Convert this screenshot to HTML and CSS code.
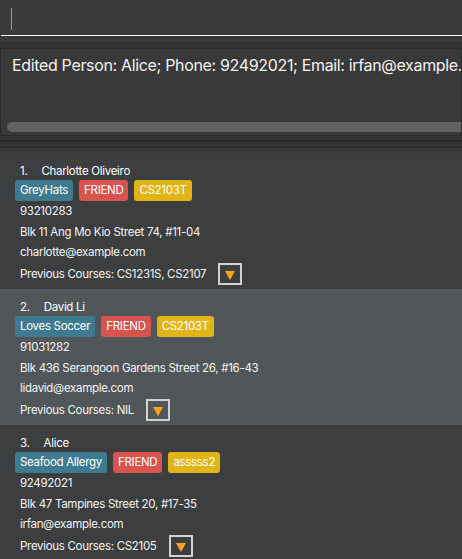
FILE: index.html
```html
<!DOCTYPE html>
<html>
<head>
<meta charset="utf-8">
<link rel="stylesheet" href="styles.css">
</head>
<body>
<div class="app">
  <div class="command"><span class="caret"></span></div>
  <div class="sep-top"></div>
  <div class="result">
    <div class="result-text">Edited Person: Alice; Phone: 92492021; Email: irfan@example.com</div>
    <div class="hscroll"></div>
  </div>
  <div class="sep-mid"></div>
  <div class="list">
    <div class="card">
      <div class="name"><span class="idx">1.</span><span>Charlotte Oliveiro</span></div>
      <div class="tags"><span class="tag teal">GreyHats</span><span class="tag red">FRIEND</span><span class="tag yellow">CS2103T</span></div>
      <div class="line">93210283</div>
      <div class="line">Blk 11 Ang Mo Kio Street 74, #11-04</div>
      <div class="line">charlotte@example.com</div>
      <div class="courses"><span>Previous Courses: CS1231S, CS2107</span><span class="drop"><span class="tri"></span></span></div>
    </div>
    <div class="card odd">
      <div class="name"><span class="idx">2.</span><span>David Li</span></div>
      <div class="tags"><span class="tag teal">Loves Soccer</span><span class="tag red">FRIEND</span><span class="tag yellow">CS2103T</span></div>
      <div class="line">91031282</div>
      <div class="line">Blk 436 Serangoon Gardens Street 26, #16-43</div>
      <div class="line">lidavid@example.com</div>
      <div class="courses"><span>Previous Courses: NIL</span><span class="drop"><span class="tri"></span></span></div>
    </div>
    <div class="card">
      <div class="name"><span class="idx">3.</span><span>Alice</span></div>
      <div class="tags"><span class="tag teal">Seafood Allergy</span><span class="tag red">FRIEND</span><span class="tag yellow">asssss2</span></div>
      <div class="line">92492021</div>
      <div class="line">Blk 47 Tampines Street 20, #17-35</div>
      <div class="line">irfan@example.com</div>
      <div class="courses"><span>Previous Courses: CS2105</span><span class="drop"><span class="tri"></span></span></div>
    </div>
  </div>
</div>
</body>
</html>
```
FILE: styles.css
```css
html, body {
  margin: 0;
  padding: 0;
  background: #383838;
  overflow: hidden;
}
.app {
  width: 462px;
  height: 559px;
  overflow: hidden;
  font-family: Inter, "Liberation Sans", sans-serif;
  color: #ffffff;
}
.command {
  height: 36px;
  background: #3a3a3a;
  border-bottom: 1px solid #ffffff;
  margin-left: 1px;
  padding: 8px 0 0 10px;
  box-sizing: border-box;
}
.caret {
  display: block;
  width: 1px;
  height: 22px;
  background: #9c9c9c;
}
.sep-top {
  height: 12px;
  background: linear-gradient(to bottom, #383838 0, #383838 6px, #2e2e2e 6px, #2e2e2e 7px, #333333 7px, #333333 12px);
}
.result {
  height: 88px;
  box-sizing: border-box;
  border: 1px solid #2b2b2b;
  background: #393939;
  display: flex;
  flex-direction: column;
  overflow: hidden;
  padding: 7px 0 3px 6px;
}
.result-text {
  font-size: 16px;
  letter-spacing: -0.34px;
  line-height: 19px;
  white-space: nowrap;
  padding-left: 5px;
  color: #f2f2f2;
}
.hscroll {
  margin-top: auto;
  flex: none;
  height: 10px;
  width: 500px;
  border-radius: 5px;
  background: #636363;
}
.sep-mid {
  height: 17px;
  background: linear-gradient(to bottom,
    #333333 0, #333333 4px,
    #2a2a2a 4px, #2a2a2a 6px,
    #333333 6px, #333333 11px,
    #2b2b2b 11px, #2b2b2b 12px,
    #383838 12px, #383838 17px);
}
.list {
  background: #3c3e3f;
}
.card {
  height: 136px;
  box-sizing: border-box;
  padding: 10px 0 3px 15px;
  background: #3c3e3f;
  font-size: 11.5px;
  letter-spacing: -0.3px;
}
.card.odd {
  background: #515658;
}
.name {
  height: 17px;
  line-height: 17px;
  padding-left: 5px;
  display: flex;
  white-space: nowrap;
}
.idx {
  margin-right: 14px;
}
.tags {
  display: flex;
  gap: 6px;
  height: 21px;
}
.tag {
  height: 21px;
  line-height: 21px;
  padding: 0 5px;
  border-radius: 3px;
  color: #ffffff;
  white-space: nowrap;
}
.teal { background: #3e7b91; }
.red { background: #d9534f; }
.yellow { background: #e1b418; }
.line {
  height: 20.5px;
  line-height: 20.5px;
  padding-left: 5px;
  white-space: nowrap;
  color: #f4f4f4;
}
.courses {
  height: 23px;
  display: flex;
  align-items: center;
  padding-left: 5px;
  white-space: nowrap;
  color: #f4f4f4;
}
.drop {
  margin-left: 12px;
  width: 24px;
  height: 22px;
  box-sizing: border-box;
  border: 2px solid #d2d2d2;
  display: flex;
  align-items: center;
  justify-content: center;
  padding-top: 3px;
}
.tri {
  width: 0;
  height: 0;
  border-left: 5px solid transparent;
  border-right: 5px solid transparent;
  border-top: 9px solid #ffa31a;
}
```
